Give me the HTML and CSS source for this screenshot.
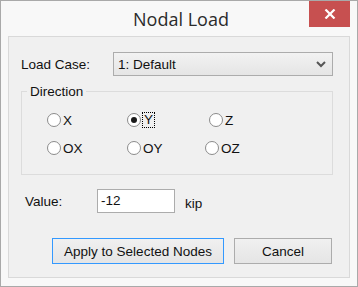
FILE: index.html
```html
<!DOCTYPE html>
<html lang="en">
    <head>
        <meta charset="UTF-8" />
        <title>Nodal Load</title>
        <link rel="stylesheet" href="styles.css">
    </head>
    <body>
        <div class="window">
            <div class="titlebar">
                <span></span>
                <div class="title">Nodal Load</div>
                <div class="close-cell">
                    <button class="close">
                        <svg width="12" height="10" viewBox="0 0 12 10">
                            <path d="M1.5 0.5 L10.5 9.5 M10.5 0.5 L1.5 9.5" stroke="#fff" stroke-width="2.2" fill="none" />
                        </svg>
                    </button>
                </div>
            </div>

            <div class="panel">
                <div class="row load-row">
                    <span class="label">Load Case:</span>
                    <div class="combo">
                        <span>1: Default</span>
                        <svg width="10" height="7" viewBox="0 0 10 7">
                            <path d="M1 1 L5 5 L9 1" stroke="#555" stroke-width="2" fill="none" />
                        </svg>
                    </div>
                </div>

                <fieldset class="group">
                    <legend>Direction</legend>
                    <div class="radios">
                        <label class="radio"><span class="dot"></span>X</label>
                        <label class="radio"><span class="dot on"></span><span class="focus">Y</span></label>
                        <label class="radio shift-r"><span class="dot"></span>Z</label>
                        <label class="radio"><span class="dot"></span>OX</label>
                        <label class="radio"><span class="dot"></span>OY</label>
                        <label class="radio shift-l"><span class="dot"></span>OZ</label>
                    </div>
                </fieldset>

                <div class="row value-row">
                    <span class="label value-label">Value:</span>
                    <div class="textbox">-12</div>
                    <span class="unit">kip</span>
                </div>

                <div class="buttons">
                    <button class="btn default">Apply to Selected Nodes</button>
                    <button class="btn">Cancel</button>
                </div>
            </div>
        </div>
    </body>
</html>
```

FILE: styles.css
```css
body {
    margin: 0;
    font-family: "Liberation Sans", Arial, sans-serif;
    font-size: 13.5px;
    color: #111;
}
.window {
    width: 358px;
    height: 287px;
    box-sizing: border-box;
    border: 1px solid #a9a9a9;
    background: #f8f8f8;
    padding: 0 7px 8px 7px;
    display: flex;
    flex-direction: column;
}
.titlebar {
    height: 35px;
    display: grid;
    grid-template-columns: 1fr auto 1fr;
}
.title {
    font-family: "Open Sans", sans-serif;
    font-size: 18px;
    color: #2b2b2b;
    line-height: 24px;
    padding-top: 6px;
    padding-left: 4px;
}
.close-cell {
    display: flex;
    justify-content: flex-end;
    align-items: flex-start;
}
.close {
    width: 41px;
    height: 26px;
    border: none;
    padding: 0;
    background: #c75050;
    display: flex;
    align-items: center;
    justify-content: center;
}
.panel {
    flex: 1;
    border: 1px solid #d9d9d9;
    background: #f0f0f0;
    padding: 15px 16px 0 12px;
    display: flex;
    flex-direction: column;
}
.row {
    display: flex;
    align-items: center;
}
.load-row .label {
    width: 92px;
}
.combo {
    flex: 1;
    height: 24px;
    box-sizing: border-box;
    border: 1px solid #acacac;
    background: linear-gradient(#f2f2f2, #e5e5e5);
    display: flex;
    align-items: center;
    justify-content: space-between;
    padding: 0 6px 0 4px;
}
.group {
    margin: 8px 0 0 0;
    padding: 14px 0 0 25px;
    height: 91px;
    box-sizing: border-box;
    border: 1px solid #dcdcdc;
}
.group legend {
    padding: 0 3px;
    margin-left: -20px;
    line-height: 15px;
}
.radios {
    display: grid;
    grid-template-columns: 80px 80px 80px;
    row-gap: 14px;
}
.radio {
    display: flex;
    align-items: center;
    height: 14px;
    gap: 2px;
}
.shift-r {
    margin-left: 2px;
}
.shift-l {
    margin-left: -2px;
}
.dot {
    width: 14px;
    height: 14px;
    box-sizing: border-box;
    border-radius: 50%;
    border: 1px solid #8b8b8b;
    background: #fff;
    display: flex;
    align-items: center;
    justify-content: center;
}
.dot.on::after {
    content: "";
    width: 6px;
    height: 6px;
    border-radius: 50%;
    background: #1a1a1a;
}
.focus {
    outline: 1px dotted #000;
    padding: 0 1px;
    line-height: 14px;
}
.value-row {
    margin-top: 14px;
}
.value-label {
    width: 72px;
    padding-left: 4px;
}
.textbox {
    width: 78px;
    height: 24px;
    box-sizing: border-box;
    border: 1px solid #acacac;
    background: #fff;
    padding: 2px 3px;
    line-height: 17px;
}
.unit {
    margin-left: 10px;
    padding-top: 4px;
}
.buttons {
    display: flex;
    gap: 10px;
    margin-top: 25px;
    padding-left: 31px;
}
.btn {
    height: 26px;
    border: 1px solid #acacac;
    background: linear-gradient(#f0f0f0, #e5e5e5);
    font-family: inherit;
    font-size: 13.5px;
    color: #111;
    padding: 0;
    width: 98px;
}
.btn.default {
    width: 172px;
    border-color: #3399ff;
}
```
